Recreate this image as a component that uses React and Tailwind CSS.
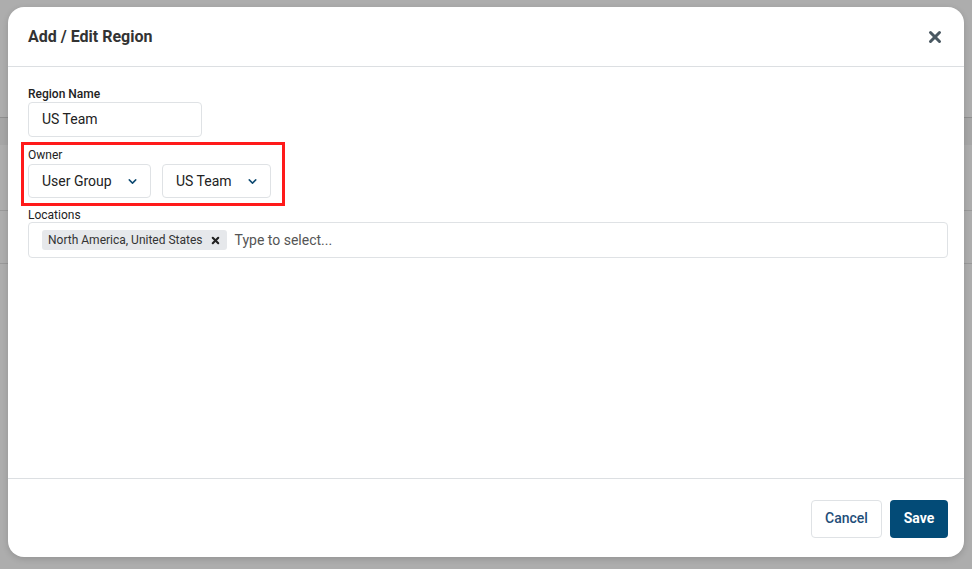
import { X, ChevronDown } from 'lucide-react';

export default function App() {
  return (
    <div className="relative w-[972px] h-[569px] overflow-hidden bg-[#adadad] font-['Roboto',sans-serif]">
      {/* page behind the overlay */}
      <div className="flex flex-col">
        <div className="h-[117px]" />
        <div className="h-[28px] border-t border-[#8f8f8f] bg-[#a6a6a6]" />
        <div className="h-[65px]" />
        <div className="h-[53px] border-t border-[#999]" />
        <div className="border-t border-[#999]" />
      </div>

      {/* modal */}
      <div className="absolute left-[8px] top-[7px] w-[956px] h-[550px] bg-white rounded-[16px] flex flex-col shadow-[0_2px_6px_rgba(0,0,0,0.15)]">
        <div className="h-[60px] shrink-0 flex items-center justify-between pl-5 pr-[20px] border-b border-[#dcdfe2]">
          <h2 className="text-[16px] font-bold text-[#333]">Add / Edit Region</h2>
          <X size={18} strokeWidth={4} className="text-[#4a5862]" />
        </div>

        <div className="flex-1 pl-5 pr-[16px] pt-[20px]">
          <label className="block text-[12px] font-medium text-[#222] leading-[14px] mb-[1px]">Region Name</label>
          <div className="w-[174px] h-[35px] border border-[#dfe2e5] rounded-[4px] flex items-center px-[13px] text-[14px] text-[#222]">
            US Team
          </div>

          <div className="mt-[5px] -ml-[7px] w-[264px] border-[3px] border-[#ff1a1a] pl-[4px] pt-[4px] pb-[5px]">
            <label className="block text-[12px] text-[#222] leading-[13px] mb-[2px]">Owner</label>
            <div className="flex gap-[11px]">
              <div className="w-[123px] h-[34px] border border-[#dfe2e5] rounded-[4px] flex items-center justify-between pl-[13px] pr-[11px] text-[14px] text-[#222]">
                <span>User Group</span>
                <ChevronDown size={13} strokeWidth={2.75} className="text-[#0e4a72]" />
              </div>
              <div className="w-[109px] h-[34px] border border-[#dfe2e5] rounded-[4px] flex items-center justify-between pl-[13px] pr-[11px] text-[14px] text-[#222]">
                <span>US Team</span>
                <ChevronDown size={13} strokeWidth={2.75} className="text-[#0e4a72]" />
              </div>
            </div>
          </div>

          <label className="block mt-[2px] text-[12px] text-[#222] leading-[14px]">Locations</label>
          <div className="h-[36px] border border-[#dfe2e5] rounded-[4px] flex items-center px-[13px] gap-[8px]">
            <span className="h-[20px] rounded-[3px] bg-[#e6e8eb] flex items-center gap-[7px] pl-[6px] pr-[6px] text-[12px] text-[#333]">
              North America, United States
              <X size={11} strokeWidth={4.5} className="text-[#222]" />
            </span>
            <span className="text-[14px] text-[#555]">Type to select...</span>
          </div>
        </div>

        <div className="h-[79px] shrink-0 border-t border-[#dcdfe2] flex items-center justify-end gap-[8px] pr-[16px] pt-[1px]">
          <button className="h-[38px] w-[71px] border border-[#dfe2e5] rounded-[4px] text-[14px] text-[#1f4e79] font-medium">Cancel</button>
          <button className="h-[38px] w-[58px] rounded-[4px] bg-[#034b77] text-[14px] text-white font-bold">Save</button>
        </div>
      </div>
    </div>
  );
}
